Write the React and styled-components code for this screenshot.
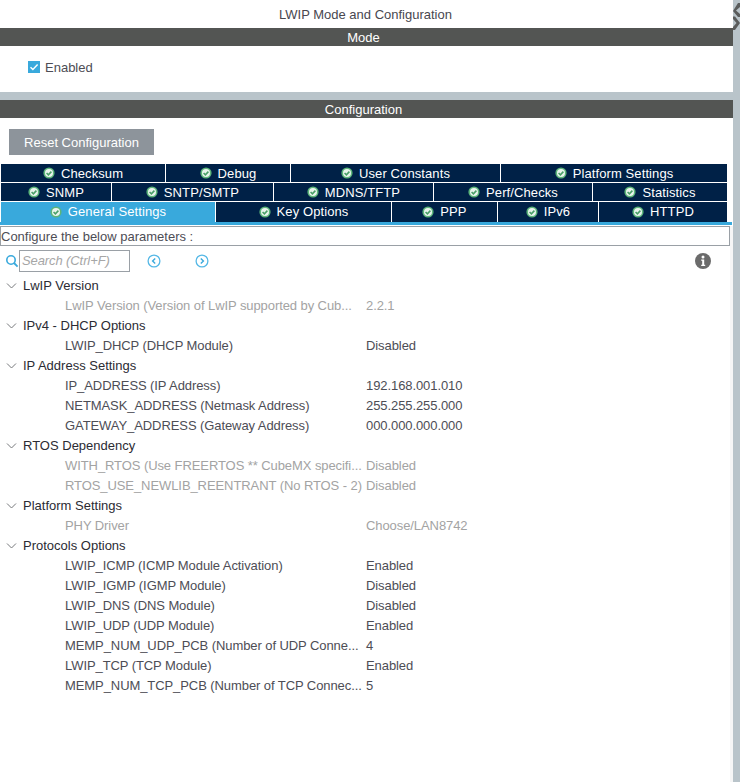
import React from 'react';
import styled, { createGlobalStyle } from 'styled-components';

const GlobalStyle = createGlobalStyle`
  html, body { margin: 0; padding: 0; background: #fff; }
  body { font-family: "Liberation Sans", Arial, sans-serif; font-size: 13px; overflow: hidden; }
`;

const tabRows = [
  [['Checksum', 164], ['Debug', 124], ['User Constants', 209], ['Platform Settings', 226]],
  [['SNMP', 110], ['SNTP/SMTP', 161], ['MDNS/TFTP', 159], ['Perf/Checks', 158], ['Statistics', 134]],
  [['General Settings', 214, true], ['Key Options', 175], ['PPP', 105], ['IPv6', 100], ['HTTPD', 128]],
];

const groups = [
  { name: 'LwIP Version', items: [['LwIP Version (Version of LwIP supported by Cub...', '2.2.1', true]] },
  { name: 'IPv4 - DHCP Options', items: [['LWIP_DHCP (DHCP Module)', 'Disabled']] },
  {
    name: 'IP Address Settings',
    items: [
      ['IP_ADDRESS (IP Address)', '192.168.001.010'],
      ['NETMASK_ADDRESS (Netmask Address)', '255.255.255.000'],
      ['GATEWAY_ADDRESS (Gateway Address)', '000.000.000.000'],
    ],
  },
  {
    name: 'RTOS Dependency',
    items: [
      ['WITH_RTOS (Use FREERTOS ** CubeMX specifi...', 'Disabled', true],
      ['RTOS_USE_NEWLIB_REENTRANT (No RTOS - 2)', 'Disabled', true],
    ],
  },
  { name: 'Platform Settings', items: [['PHY Driver', 'Choose/LAN8742', true]] },
  {
    name: 'Protocols Options',
    items: [
      ['LWIP_ICMP (ICMP Module Activation)', 'Enabled'],
      ['LWIP_IGMP (IGMP Module)', 'Disabled'],
      ['LWIP_DNS (DNS Module)', 'Disabled'],
      ['LWIP_UDP (UDP Module)', 'Enabled'],
      ['MEMP_NUM_UDP_PCB (Number of UDP Conne...', '4'],
      ['LWIP_TCP (TCP Module)', 'Enabled'],
      ['MEMP_NUM_TCP_PCB (Number of TCP Connec...', '5'],
    ],
  },
];

const Page = styled.div`
  display: flex;
  width: 740px;
  height: 782px;
  overflow: hidden;
`;
const Main = styled.div`
  width: 733px;
  flex: none;
`;
const Splitter = styled.div`
  position: relative;
  flex: 1;
  background: #b9c4ca;
`;
const Grip = styled.svg`
  position: absolute;
  left: 0;
  top: 3px;
`;
const Title = styled.div`
  height: 28px;
  line-height: 29px;
  text-align: center;
  padding-right: 2px;
  font-size: 13px;
  color: #48474f;
`;
const Bar = styled.div`
  height: 18px;
  line-height: 19px;
  background: #535553;
  color: #fff;
  text-align: center;
  padding-right: 6px;
  font-size: 13px;
`;
const ModeBody = styled.div`
  height: 42px;
  padding: 0 0 4px 28px;
  display: flex;
  align-items: center;
  gap: 5px;
  color: #4d4d55;
  font-size: 13px;
`;
const Check = styled.span`
  width: 12px;
  height: 12px;
  background: #39a9dc;
  display: flex;
  align-items: center;
  justify-content: center;
`;
const Divider = styled.div`
  height: 8px;
  background: #b9c4ca;
`;
const ButtonRow = styled.div`
  height: 46px;
  display: flex;
  align-items: center;
  padding: 1px 0 0 9px;
  box-sizing: border-box;
`;
const ResetButton = styled.button`
  width: 145px;
  height: 26px;
  border: 0;
  padding: 1px 0 0;
  background: #8d949b;
  color: #fff;
  font: 13px "Liberation Sans", Arial, sans-serif;
`;
const Tabs = styled.div`
  display: flex;
  flex-direction: column;
  gap: 1px;
  padding-left: 1px;
`;
const TabRow = styled.div`
  display: flex;
  gap: 1px;
  height: ${(p) => (p.$tall ? '20px' : '18px')};
`;
const Tab = styled.div`
  width: ${(p) => p.$w}px;
  flex: none;
  box-sizing: border-box;
  padding-bottom: ${(p) => (p.$lift ? '1px' : '0')};
  background: ${(p) => (p.$active ? '#39a9dc' : '#002147')};
  color: #fff;
  display: flex;
  align-items: center;
  justify-content: center;
  gap: 6px;
  font-size: 13px;
  letter-spacing: 0.1px;
`;
const BlueLine = styled.div`
  height: 3px;
  width: 732px;
  background: #39a9dc;
`;
const Lower = styled.div`
  width: 730px;
  box-shadow: 3px 0 0 #f6f6f6;
  height: 557px;
`;
const ParamBox = styled.div`
  height: 20px;
  border: 1px solid #9aa0a6;
  box-sizing: border-box;
  margin-top: 1px;
  line-height: 19px;
  color: #4d4d55;
  font-size: 13px;
`;
const SearchRow = styled.div`
  position: relative;
  display: flex;
  align-items: center;
  height: 30px;
  padding-left: 5px;
`;
const SearchBox = styled.div`
  width: 111px;
  height: 22px;
  box-sizing: border-box;
  border: 1px solid #9aa0a6;
  line-height: 20px;
  padding-left: 2px;
  font-style: italic;
  color: #a6a6a6;
  font-size: 13px;
  letter-spacing: -0.1px;
`;
const NavIcons = styled.div`
  display: flex;
  gap: 34px;
  margin-left: 17px;
`;
const InfoIcon = styled.svg`
  position: absolute;
  right: 19px;
  top: 7px;
`;
const Tree = styled.div`
  display: flex;
  flex-direction: column;
  margin-top: -1px;
`;
const GroupRow = styled.div`
  height: 20px;
  display: flex;
  align-items: center;
  padding-left: 6px;
  gap: 6px;
  color: #2b2b33;
  font-size: 13px;
`;
const ItemRow = styled.div`
  height: 20px;
  display: grid;
  grid-template-columns: 301px 1fr;
  align-items: center;
  padding-left: 65px;
  font-size: 13px;
  letter-spacing: -0.08px;
  color: ${(p) => (p.$muted ? '#a3a3a3' : '#4d4d55')};
  white-space: nowrap;
`;

const TabCheck = () => (
  <svg width="12" height="12" viewBox="0 0 12 12">
    <circle cx="6" cy="6" r="5.6" fill="#5cb57a" />
    <circle cx="6" cy="6" r="4" fill="#e8f4ec" />
    <path d="M3.6 6l1.8 1.8L8.4 4.6" fill="none" stroke="#4a9f68" strokeWidth="1.6" />
  </svg>
);

const NavCircle = ({ right }) => (
  <svg width="14" height="14" viewBox="0 0 14 14">
    <circle cx="7" cy="7" r="5.9" fill="none" stroke="#55b8e6" strokeWidth="1.3" />
    <path d={right ? 'M5.8 4.4L8.4 7l-2.6 2.6' : 'M8.2 4.4L5.6 7l2.6 2.6'} fill="none" stroke="#39a9dc" strokeWidth="1.4" />
  </svg>
);

const Chevron = () => (
  <svg width="11" height="11" viewBox="0 0 11 11">
    <path d="M1 3.5l4.5 4.5L10 3.5" fill="none" stroke="#77797c" strokeWidth="1" />
  </svg>
);

export default function App() {
  return (
    <Page>
      <GlobalStyle />
      <Main>
        <Title>LWIP Mode and Configuration</Title>
        <Bar>Mode</Bar>
        <ModeBody>
          <Check>
            <svg width="10" height="10" viewBox="0 0 10 10">
              <path d="M1.5 5.2l2.4 2.4L8.6 2.6" fill="none" stroke="#fff" strokeWidth="1.4" />
            </svg>
          </Check>
          Enabled
        </ModeBody>
        <Divider />
        <Bar>Configuration</Bar>
        <ButtonRow>
          <ResetButton>Reset Configuration</ResetButton>
        </ButtonRow>
        <Tabs>
          {tabRows.map((row, i) => (
            <TabRow key={i} $tall={i === 2}>
              {row.map(([label, w, active]) => (
                <Tab key={label} $w={w} $active={active} $lift={i === 2}>
                  <TabCheck />
                  {label}
                </Tab>
              ))}
            </TabRow>
          ))}
        </Tabs>
        <BlueLine />
        <Lower>
          <ParamBox>Configure the below parameters :</ParamBox>
          <SearchRow>
            <svg width="14" height="14" viewBox="0 0 14 14">
              <circle cx="6" cy="6" r="4.2" fill="none" stroke="#39a9dc" strokeWidth="1.6" />
              <path d="M9 9l3.6 3.6" stroke="#39a9dc" strokeWidth="1.8" />
            </svg>
            <SearchBox>Search (Ctrl+F)</SearchBox>
            <NavIcons>
              <NavCircle />
              <NavCircle right />
            </NavIcons>
            <InfoIcon width="16" height="16" viewBox="0 0 16 16">
              <circle cx="8" cy="8" r="8" fill="#6b6b6b" />
              <circle cx="8" cy="4" r="1.5" fill="#fff" />
              <path d="M6.2 6.6h3v5.2h1v1.2H6.2v-1.2h1V7.8h-1z" fill="#fff" />
            </InfoIcon>
          </SearchRow>
          <Tree>
            {groups.map((group) => (
              <React.Fragment key={group.name}>
                <GroupRow>
                  <Chevron />
                  {group.name}
                </GroupRow>
                {group.items.map(([label, value, muted]) => (
                  <ItemRow key={label} $muted={muted}>
                    <span>{label}</span>
                    <span>{value}</span>
                  </ItemRow>
                ))}
              </React.Fragment>
            ))}
          </Tree>
        </Lower>
      </Main>
      <Splitter>
        <Grip width="7" height="28" viewBox="0 0 7 28">
          <path d="M7 0v4L3 7.5 7 11v3H5L0 8l5-8z" fill="#5a5c5c" />
          <path d="M0 13.5h2L7 20l-5 7H0v-3l3.5-4L0 16z" fill="#5a5c5c" />
        </Grip>
      </Splitter>
    </Page>
  );
}
